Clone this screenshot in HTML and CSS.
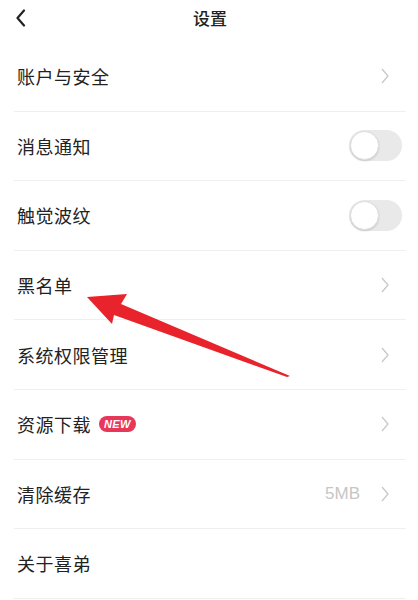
FILE: index.html
```html
<!DOCTYPE html>
<html lang="zh-CN">
<head>
<meta charset="utf-8">
<title>设置</title>
<link rel="stylesheet" href="styles.css">
</head>
<body>
<div class="page">
  <header class="topbar">
    <svg class="back" width="12" height="18" viewBox="0 0 12 18"><path d="M9 1.5 L2.5 9 L9 16.5" fill="none" stroke="#222" stroke-width="2.2" stroke-linecap="round" stroke-linejoin="round"/></svg>
    <h1 class="title">设置</h1>
  </header>
  <ul class="list">
    <li class="row"><span class="label">账户与安全</span><svg class="chev" width="10" height="16" viewBox="0 0 10 16"><path d="M2 1 L8 8 L2 15" fill="none" stroke="#c8c8c8" stroke-width="1.3"/></svg></li>
    <li class="row"><span class="label">消息通知</span><span class="toggle"><span class="knob"></span></span></li>
    <li class="row"><span class="label">触觉波纹</span><span class="toggle"><span class="knob"></span></span></li>
    <li class="row"><span class="label">黑名单</span><svg class="chev" width="10" height="16" viewBox="0 0 10 16"><path d="M2 1 L8 8 L2 15" fill="none" stroke="#c8c8c8" stroke-width="1.3"/></svg></li>
    <li class="row"><span class="label">系统权限管理</span><svg class="chev" width="10" height="16" viewBox="0 0 10 16"><path d="M2 1 L8 8 L2 15" fill="none" stroke="#c8c8c8" stroke-width="1.3"/></svg></li>
    <li class="row"><span class="label">资源下载</span><span class="badge">NEW</span><svg class="chev" width="10" height="16" viewBox="0 0 10 16"><path d="M2 1 L8 8 L2 15" fill="none" stroke="#c8c8c8" stroke-width="1.3"/></svg></li>
    <li class="row"><span class="label">清除缓存</span><span class="value">5MB</span><svg class="chev" width="10" height="16" viewBox="0 0 10 16"><path d="M2 1 L8 8 L2 15" fill="none" stroke="#c8c8c8" stroke-width="1.3"/></svg></li>
    <li class="row"><span class="label">关于喜弟</span></li>
  </ul>
  <svg class="arrow" width="418" height="600" viewBox="0 0 418 600"><polygon points="87,297 127,294 121,304 290,376 287,377 114,315 112,324" fill="#e8232b"/></svg>
</div>
</body>
</html>
```
FILE: styles.css
```css
* { box-sizing: border-box; }
html, body { margin: 0; padding: 0; background: #fff; }
body {
  font-family: "Noto Sans CJK SC", "Noto Sans", sans-serif;
  color: #222;
  width: 418px;
  height: 600px;
  overflow: hidden;
}
.page { position: relative; width: 418px; height: 600px; }
.topbar {
  height: 42px;
  display: flex;
  align-items: center;
  justify-content: center;
  position: relative;
}
.back { position: absolute; left: 15px; top: 9px; }
.title {
  margin: 0;
  font-size: 17px;
  font-weight: 500;
  line-height: 1;
  margin-top: -8px;
  margin-left: 2px;
}
.list { list-style: none; margin: 0 12px 0 14px; padding: 0; }
.row {
  height: 69.6px;
  border-bottom: 1px solid #efefef;
  display: flex;
  align-items: center;
  padding: 0 16px 0 3px;
}
.label { font-size: 18px; line-height: 1; letter-spacing: 0.5px; }
.chev { margin-left: auto; }
.toggle {
  margin-left: auto;
  margin-right: -12px;
  width: 53px;
  height: 31px;
  border-radius: 16px;
  background: #e9e9e9;
  position: relative;
}
.knob {
  position: absolute;
  left: 1px;
  top: 1px;
  width: 29px;
  height: 29px;
  border-radius: 50%;
  background: #fff;
  border: 1px solid #dedede;
  box-shadow: 0 1px 2px rgba(0,0,0,0.15);
}
.badge {
  margin-left: 8px;
  background: #e8385a;
  color: #fff;
  font-family: "Liberation Sans", Arial, sans-serif;
  font-weight: 700;
  font-style: italic;
  font-size: 11px;
  line-height: 16px;
  height: 16px;
  padding: 0 5px;
  border-radius: 8px;
  letter-spacing: 0.3px;
}
.value {
  margin-left: auto;
  margin-right: 20px;
  font-family: "Liberation Sans", Arial, sans-serif;
  font-size: 17px;
  color: #c6c6c6;
}
.value + .chev { margin-left: 0; }
.arrow { position: absolute; left: 0; top: 0; pointer-events: none; }
```
